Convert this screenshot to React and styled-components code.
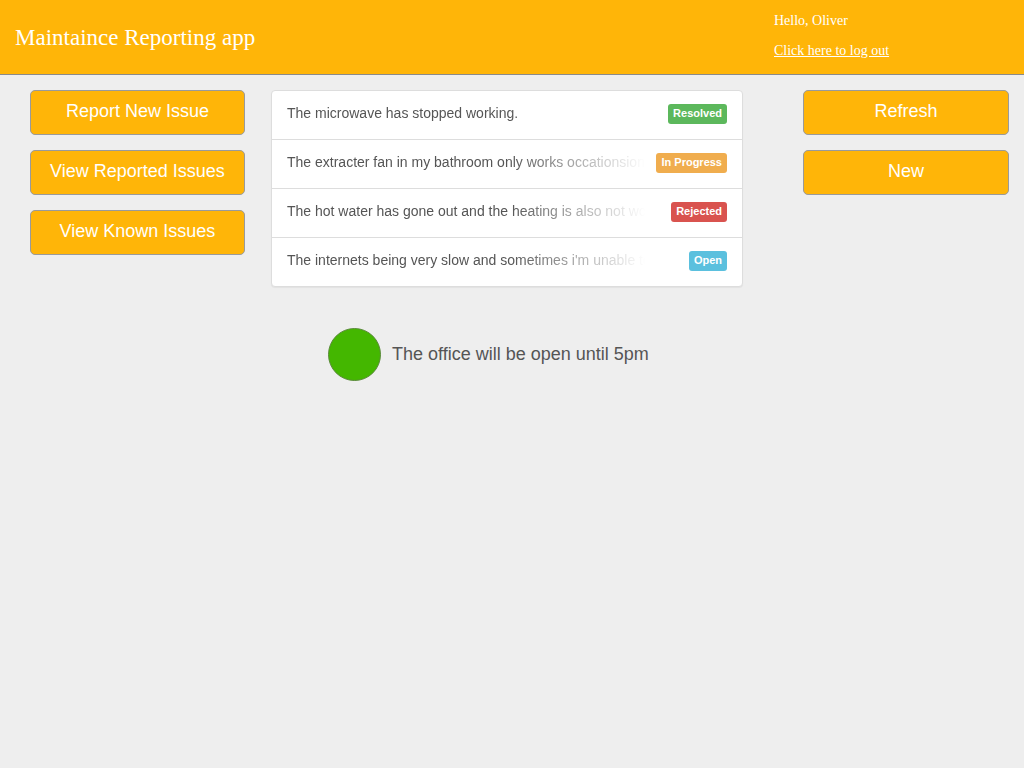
import React from "react";
import styled, { createGlobalStyle } from "styled-components";

const GlobalStyle = createGlobalStyle`
  html, body {
    margin: 0;
    padding: 0;
    background: #eeeeee;
  }
`;

const Page = styled.div`
  min-height: 768px;
  background: #eeeeee;
`;

const Header = styled.header`
  height: 74px;
  background: #ffb508;
  border-bottom: 1px solid #8a8a8a;
  display: flex;
  justify-content: space-between;
  font-family: "Liberation Serif", "Times New Roman", serif;
  color: #ffffff;
`;

const Title = styled.h1`
  margin: 0;
  padding: 1px 0 0 15px;
  font-size: 23px;
  font-weight: normal;
  line-height: 74px;
`;

const UserBox = styled.div`
  width: 250px;
  padding-top: 13px;
  font-size: 14px;
  line-height: 16px;
  display: flex;
  flex-direction: column;
  gap: 14px;
`;

const Logout = styled.a`
  color: #ffffff;
  text-decoration: underline;
`;

const Main = styled.main`
  display: flex;
  align-items: flex-start;
  padding: 15px 15px 0 30px;
`;

const ButtonColumn = styled.div`
  width: ${(p) => p.width}px;
  display: flex;
  flex-direction: column;
  gap: 15px;
`;

const Button = styled.button`
  height: 45px;
  background: #ffb508;
  border: 1px solid #9a9a9a;
  border-radius: 5px;
  color: #ffffff;
  font-family: "Liberation Sans", Arial, sans-serif;
  font-size: 18px;
  padding: 0 0 3px;
  cursor: pointer;
`;

const Center = styled.div`
  width: 472px;
  margin-left: 26px;
  margin-right: auto;
`;

const List = styled.ul`
  margin: 0;
  padding: 0;
  list-style: none;
  background: #ffffff;
  border: 1px solid #dddddd;
  border-radius: 4px;
  box-shadow: 0 1px 1px rgba(0, 0, 0, 0.05);
`;

const Item = styled.li`
  height: 46px;
  display: flex;
  align-items: center;
  padding: 0 15px 2px;
  border-top: ${(p) => (p.first ? "none" : "1px solid #dddddd")};
  font-family: "Liberation Sans", Arial, sans-serif;
`;

const IssueText = styled.span`
  width: 358px;
  white-space: nowrap;
  overflow: hidden;
  font-size: 14px;
  line-height: 18px;
  color: #555555;
  padding-bottom: 2px;
  -webkit-mask-image: linear-gradient(to right, #000 62%, transparent 100%);
  mask-image: linear-gradient(to right, #000 62%, transparent 100%);
`;

const badgeColors = {
  Resolved: "#5cb85c",
  "In Progress": "#f0ad4e",
  Rejected: "#d9534f",
  Open: "#5bc0de",
};

const Badge = styled.span`
  margin-left: auto;
  background: ${(p) => badgeColors[p.status]};
  color: #ffffff;
  font-size: 11px;
  font-weight: bold;
  line-height: 14px;
  padding: 2px 5px 4px;
  border-radius: 3px;
`;

const Status = styled.div`
  display: flex;
  align-items: center;
  gap: 11px;
  margin-top: 41px;
  padding-left: 57px;
  font-family: "Liberation Sans", Arial, sans-serif;
  font-size: 18px;
  color: #555555;
`;

const Light = styled.span`
  width: 51px;
  height: 51px;
  border-radius: 50%;
  background: #44b700;
  border: 1px solid #5a8a3a;
`;

const issues = [
  { text: "The microwave has stopped working.", status: "Resolved" },
  { text: "The extracter fan in my bathroom only works occationsionally", status: "In Progress" },
  { text: "The hot water has gone out and the heating is also not working", status: "Rejected" },
  { text: "The internets being very slow and sometimes i'm unable to connect", status: "Open" },
];

const App = () => {
  return (
    <Page>
      <GlobalStyle />
      <Header>
        <Title>Maintaince Reporting app</Title>
        <UserBox>
          <span>Hello, Oliver</span>
          <Logout href="#">Click here to log out</Logout>
        </UserBox>
      </Header>
      <Main>
        <ButtonColumn width={215}>
          <Button>Report New Issue</Button>
          <Button>View Reported Issues</Button>
          <Button>View Known Issues</Button>
        </ButtonColumn>
        <Center>
          <List>
            {issues.map((issue, i) => (
              <Item key={i} first={i === 0}>
                <IssueText>{issue.text}</IssueText>
                <Badge status={issue.status}>{issue.status}</Badge>
              </Item>
            ))}
          </List>
          <Status>
            <Light />
            The office will be open until 5pm
          </Status>
        </Center>
        <ButtonColumn width={206}>
          <Button>Refresh</Button>
          <Button>New</Button>
        </ButtonColumn>
      </Main>
    </Page>
  );
};

export default App;
